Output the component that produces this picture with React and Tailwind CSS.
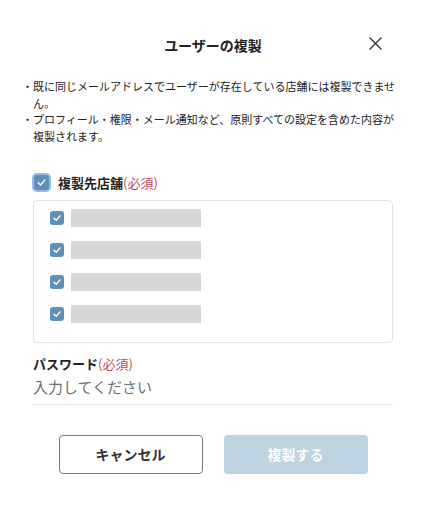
import React, { useState } from 'react';

const Check = ({ size = 14, ring = false }) => (
    <span
        className={`flex items-center justify-center rounded-[3px] bg-[#5e8fb6] ${ring ? 'ring-2 ring-[#9db7e6]' : ''}`}
        style={{ width: size, height: size }}
    >
        <svg width={size - 4} height={size - 4} viewBox="0 0 12 12" fill="none">
            <path d="M2.5 6.3 L5 8.8 L9.6 3.4" stroke="white" strokeWidth="1.6" strokeLinecap="round" strokeLinejoin="round" />
        </svg>
    </span>
);

const App = () => {
    const [stores] = useState([1, 2, 3, 4]);

    return (
        <div className="w-[426px] h-[506px] bg-white text-[#222] font-['Noto_Sans_CJK_JP','Noto_Sans',sans-serif]">
            <div className="relative flex justify-center pt-[34px]">
                <h1 className="text-[14px] font-bold leading-[22px]">ユーザーの複製</h1>
                <button className="absolute right-[43px] top-[36px]">
                    <svg width="15" height="15" viewBox="0 0 15 15" fill="none">
                        <path d="M1.5 1.5 L13.5 13.5 M13.5 1.5 L1.5 13.5" stroke="#333" strokeWidth="1.4" />
                    </svg>
                </button>
            </div>

            <ul className="mt-[22px] pl-[22px] pr-[28px] text-[11px] leading-[16.5px]">
                <li className="flex">
                    <span className="w-[11px] shrink-0">・</span>
                    <span>既に同じメールアドレスでユーザーが存在している店舗には複製できません。</span>
                </li>
                <li className="flex">
                    <span className="w-[11px] shrink-0">・</span>
                    <span>プロフィール・権限・メール通知など、原則すべての設定を含めた内容が複製されます。</span>
                </li>
            </ul>

            <div className="px-[33px] mt-[29px]">
                <div className="flex items-center gap-[9px] pl-[1px]">
                    <Check size={15} ring />
                    <span className="text-[13px] font-bold">
                        複製先店舗<span className="font-normal text-[#c04a5b]">(必須)</span>
                    </span>
                </div>

                <div className="mt-[7px] h-[143px] border border-[#e3e3ec] rounded-[4px] pt-[8px] pl-[16px] flex flex-col gap-[14px]">
                    {stores.map(s => (
                        <div key={s} className="flex items-center gap-[7px]">
                            <Check size={14} />
                            <span className="w-[130px] h-[18px] bg-[#d6d6d6]" />
                        </div>
                    ))}
                </div>

                <div className="mt-[11px]">
                    <div className="text-[13px] font-bold leading-[20px]">
                        パスワード<span className="font-normal text-[#c04a5b]">(必須)</span>
                    </div>
                    <input
                        type="password"
                        placeholder="入力してください"
                        className="w-full mt-[1px] pb-[5px] text-[15px] leading-[24px] border-b border-[#e6e6ee] outline-none placeholder:text-[#6f6f6f]"
                    />
                </div>

                <div className="mt-[30px] flex justify-center gap-[21px]">
                    <button className="w-[144px] h-[39px] rounded-[4px] border border-[#777] text-[14px] font-bold text-[#333]">
                        キャンセル
                    </button>
                    <button disabled className="w-[144px] h-[39px] rounded-[4px] bg-[#bcd3e1] text-[14px] font-bold text-white">
                        複製する
                    </button>
                </div>
            </div>
        </div>
    );
};

export default App;
